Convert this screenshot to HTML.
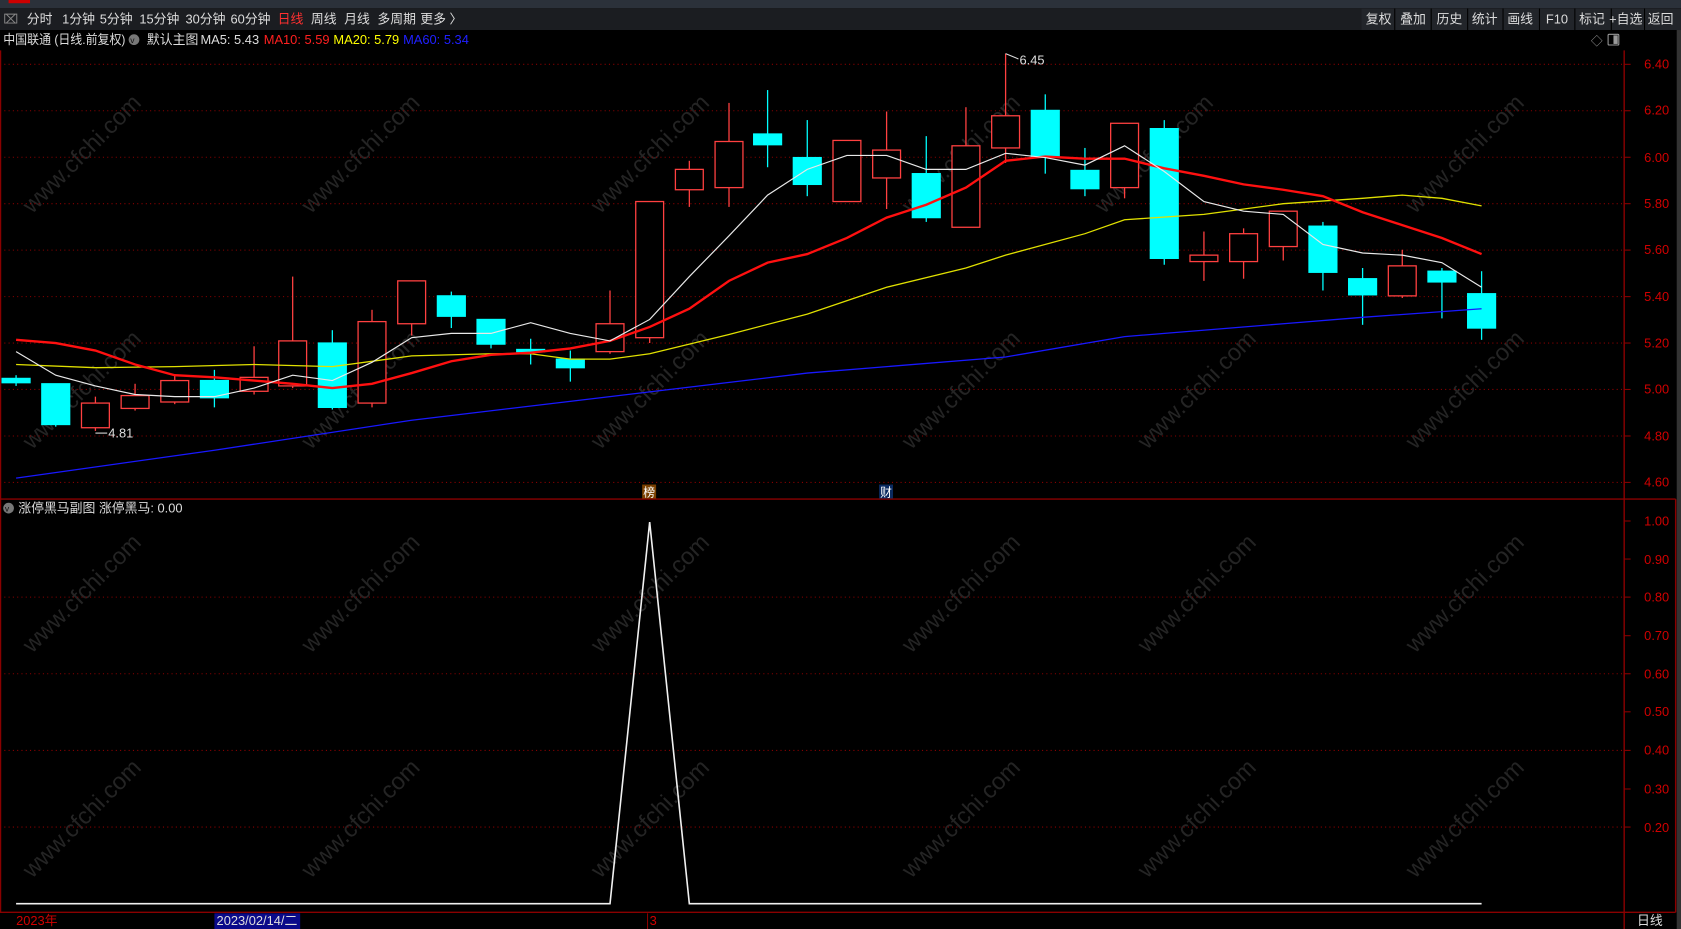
<!DOCTYPE html>
<html><head><meta charset="utf-8"><style>
html,body{margin:0;padding:0;background:#000;width:1681px;height:929px;overflow:hidden}
svg{display:block}
text{font-family:"Liberation Sans","Noto Sans CJK SC",sans-serif}
</style></head><body>
<svg width="1681" height="929" viewBox="0 0 1568 866.6" preserveAspectRatio="none" xmlns="http://www.w3.org/2000/svg">
<rect width="1568" height="867" fill="#000"/>
<rect x="0" y="0" width="1568" height="7.5" fill="#2b313a"/>
<rect x="8" y="0" width="20" height="3" fill="#c00"/>
<rect x="0" y="7.5" width="1568" height="20.5" fill="#1b1d21"/>
<text x="3" y="22" font-size="12" fill="#888">⌧</text>
<g font-size="12" fill="#ddd">
<text x="25" y="22">分时</text><text x="58" y="22">1分钟</text><text x="93" y="22">5分钟</text><text x="130" y="22">15分钟</text><text x="173" y="22">30分钟</text><text x="215" y="22">60分钟</text>
<text x="259" y="22" fill="#ff3030">日线</text><text x="290" y="22">周线</text><text x="321" y="22">月线</text><text x="352" y="22">多周期</text><text x="392" y="22">更多 〉</text>
</g>
<g font-size="12" fill="#ddd">
<rect x="1270" y="8" width="298" height="20" fill="#22252a"/>
<g stroke="#000" stroke-width="1"><line x1="1301" y1="8" x2="1301" y2="28"/><line x1="1335" y1="8" x2="1335" y2="28"/><line x1="1369" y1="8" x2="1369" y2="28"/><line x1="1402" y1="8" x2="1402" y2="28"/><line x1="1436" y1="8" x2="1436" y2="28"/><line x1="1469" y1="8" x2="1469" y2="28"/><line x1="1503" y1="8" x2="1503" y2="28"/><line x1="1534" y1="8" x2="1534" y2="28"/></g>
<text x="1274" y="22">复权</text><text x="1306" y="22">叠加</text><text x="1340" y="22">历史</text><text x="1373" y="22">统计</text><text x="1406" y="22">画线</text><text x="1442" y="22">F10</text><text x="1473" y="22">标记</text><text x="1501" y="22">+自选</text><text x="1537" y="22">返回</text>
</g>
<g font-size="12">
<text x="3" y="41" fill="#ddd" textLength="114" lengthAdjust="spacingAndGlyphs">中国联通 (日线.前复权)</text>
<circle cx="125" cy="37" r="5" fill="#777"/><text x="121.5" y="40" font-size="8" fill="#111">v</text>
<text x="137" y="41" fill="#ddd">默认主图</text>
<text x="187" y="41" fill="#ddd">MA5: 5.43</text>
<text x="246" y="41" fill="#ff2020">MA10: 5.59</text>
<text x="311" y="41" fill="#ffff00">MA20: 5.79</text>
<text x="376" y="41" fill="#2020ff">MA60: 5.34</text>
</g>
<text x="1484" y="42" font-size="11" fill="#999">◇</text>
<rect x="1500" y="32" width="10" height="10" fill="none" stroke="#999" rx="1"/><rect x="1505" y="33" width="4" height="8" fill="#999"/>
<g font-size="22" fill="#242424">
<text transform="translate(30,200) rotate(-45)">www.cfchi.com</text>
<text transform="translate(290,200) rotate(-45)">www.cfchi.com</text>
<text transform="translate(560,200) rotate(-45)">www.cfchi.com</text>
<text transform="translate(850,200) rotate(-45)">www.cfchi.com</text>
<text transform="translate(1030,200) rotate(-45)">www.cfchi.com</text>
<text transform="translate(1320,200) rotate(-45)">www.cfchi.com</text>
<text transform="translate(30,420) rotate(-45)">www.cfchi.com</text>
<text transform="translate(290,420) rotate(-45)">www.cfchi.com</text>
<text transform="translate(560,420) rotate(-45)">www.cfchi.com</text>
<text transform="translate(850,420) rotate(-45)">www.cfchi.com</text>
<text transform="translate(1070,420) rotate(-45)">www.cfchi.com</text>
<text transform="translate(1320,420) rotate(-45)">www.cfchi.com</text>
<text transform="translate(30,610) rotate(-45)">www.cfchi.com</text>
<text transform="translate(290,610) rotate(-45)">www.cfchi.com</text>
<text transform="translate(560,610) rotate(-45)">www.cfchi.com</text>
<text transform="translate(850,610) rotate(-45)">www.cfchi.com</text>
<text transform="translate(1070,610) rotate(-45)">www.cfchi.com</text>
<text transform="translate(1320,610) rotate(-45)">www.cfchi.com</text>
<text transform="translate(30,820) rotate(-45)">www.cfchi.com</text>
<text transform="translate(290,820) rotate(-45)">www.cfchi.com</text>
<text transform="translate(560,820) rotate(-45)">www.cfchi.com</text>
<text transform="translate(850,820) rotate(-45)">www.cfchi.com</text>
<text transform="translate(1070,820) rotate(-45)">www.cfchi.com</text>
<text transform="translate(1320,820) rotate(-45)">www.cfchi.com</text>
</g>
<g stroke="#8a0000" stroke-width="1" stroke-dasharray="1,3">
<line x1="0" y1="60" x2="1515" y2="60"/><line x1="0" y1="103.3" x2="1515" y2="103.3"/><line x1="0" y1="146.7" x2="1515" y2="146.7"/><line x1="0" y1="190" x2="1515" y2="190"/><line x1="0" y1="233.3" x2="1515" y2="233.3"/><line x1="0" y1="276.7" x2="1515" y2="276.7"/><line x1="0" y1="320" x2="1515" y2="320"/><line x1="0" y1="363.3" x2="1515" y2="363.3"/><line x1="0" y1="406.7" x2="1515" y2="406.7"/><line x1="0" y1="450" x2="1515" y2="450"/>
<line x1="0" y1="557" x2="1515" y2="557"/><line x1="0" y1="628.5" x2="1515" y2="628.5"/><line x1="0" y1="700" x2="1515" y2="700"/><line x1="0" y1="771.5" x2="1515" y2="771.5"/>
</g>
<g stroke="#8a0000" stroke-width="1.3" fill="none">
<line x1="1515" y1="47" x2="1515" y2="867"/>
<line x1="0" y1="465.5" x2="1563" y2="465.5"/>
<line x1="0" y1="851" x2="1563" y2="851"/>
<line x1="1563" y1="465.5" x2="1563" y2="851"/>
<line x1="0.5" y1="47" x2="0.5" y2="851"/>
</g>
<rect x="1564" y="28" width="4" height="839" fill="#333"/>
<g stroke="#8a0000"><line x1="1515" y1="60" x2="1521" y2="60"/><line x1="1515" y1="103.3" x2="1521" y2="103.3"/><line x1="1515" y1="146.7" x2="1521" y2="146.7"/><line x1="1515" y1="190" x2="1521" y2="190"/><line x1="1515" y1="233.3" x2="1521" y2="233.3"/><line x1="1515" y1="276.7" x2="1521" y2="276.7"/><line x1="1515" y1="320" x2="1521" y2="320"/><line x1="1515" y1="363.3" x2="1521" y2="363.3"/><line x1="1515" y1="406.7" x2="1521" y2="406.7"/><line x1="1515" y1="450" x2="1521" y2="450"/>
<line x1="1515" y1="486" x2="1521" y2="486"/><line x1="1515" y1="521.5" x2="1521" y2="521.5"/><line x1="1515" y1="557" x2="1521" y2="557"/><line x1="1515" y1="593" x2="1521" y2="593"/><line x1="1515" y1="628.5" x2="1521" y2="628.5"/><line x1="1515" y1="664" x2="1521" y2="664"/><line x1="1515" y1="700" x2="1521" y2="700"/><line x1="1515" y1="736" x2="1521" y2="736"/><line x1="1515" y1="771.5" x2="1521" y2="771.5"/></g>
<g font-size="12" fill="#d00000" text-anchor="end">
<text x="1557" y="64">6.40</text><text x="1557" y="107">6.20</text><text x="1557" y="151">6.00</text><text x="1557" y="194">5.80</text><text x="1557" y="237">5.60</text><text x="1557" y="281">5.40</text><text x="1557" y="324">5.20</text><text x="1557" y="367">5.00</text><text x="1557" y="411">4.80</text><text x="1557" y="454">4.60</text>
<text x="1557" y="490">1.00</text><text x="1557" y="526">0.90</text><text x="1557" y="561">0.80</text><text x="1557" y="597">0.70</text><text x="1557" y="633">0.60</text><text x="1557" y="668">0.50</text><text x="1557" y="704">0.40</text><text x="1557" y="740">0.30</text><text x="1557" y="776">0.20</text>
</g>
<g stroke="#ff4040" stroke-width="1.2" fill="#000">
<line x1="89" y1="370" x2="89" y2="402"/><rect x="76" y="376" width="26" height="23"/>
<line x1="126" y1="358" x2="126" y2="383"/><rect x="113" y="369" width="26" height="12"/>
<line x1="163" y1="350" x2="163" y2="377"/><rect x="150" y="355" width="26" height="20"/>
<line x1="237" y1="323" x2="237" y2="368"/><rect x="224" y="352" width="26" height="13"/>
<line x1="273" y1="258" x2="273" y2="362"/><rect x="260" y="318" width="26" height="42"/>
<line x1="347" y1="289" x2="347" y2="380"/><rect x="334" y="300" width="26" height="76"/>
<line x1="384" y1="262" x2="384" y2="313"/><rect x="371" y="262" width="26" height="40"/>
<line x1="569" y1="271" x2="569" y2="330"/><rect x="556" y="302" width="26" height="26"/>
<line x1="606" y1="188" x2="606" y2="320"/><rect x="593" y="188" width="26" height="127"/>
<line x1="643" y1="150" x2="643" y2="193"/><rect x="630" y="158" width="26" height="19"/>
<line x1="680" y1="96" x2="680" y2="193"/><rect x="667" y="132" width="26" height="43"/>
<line x1="790" y1="131" x2="790" y2="188"/><rect x="777" y="131" width="26" height="57"/>
<line x1="827" y1="104" x2="827" y2="195"/><rect x="814" y="140" width="26" height="26"/>
<line x1="901" y1="100" x2="901" y2="212"/><rect x="888" y="136" width="26" height="76"/>
<line x1="938" y1="50" x2="938" y2="152"/><rect x="925" y="108" width="26" height="30"/>
<line x1="1049" y1="115" x2="1049" y2="185"/><rect x="1036" y="115" width="26" height="60"/>
<line x1="1123" y1="216" x2="1123" y2="262"/><rect x="1110" y="238" width="26" height="6"/>
<line x1="1160" y1="213" x2="1160" y2="260"/><rect x="1147" y="218" width="26" height="26"/>
<line x1="1197" y1="197" x2="1197" y2="243"/><rect x="1184" y="197" width="26" height="33"/>
<line x1="1308" y1="233" x2="1308" y2="278"/><rect x="1295" y="248" width="26" height="28"/>
</g>
<g stroke="#00ffff" stroke-width="1.2" fill="#00ffff">
<line x1="15" y1="350" x2="15" y2="360"/><rect x="2" y="353" width="26" height="4"/>
<line x1="52" y1="358" x2="52" y2="398"/><rect x="39" y="358" width="26" height="38"/>
<line x1="200" y1="345" x2="200" y2="380"/><rect x="187" y="355" width="26" height="16"/>
<line x1="310" y1="308" x2="310" y2="382"/><rect x="297" y="320" width="26" height="60"/>
<line x1="421" y1="272" x2="421" y2="306"/><rect x="408" y="276" width="26" height="19"/>
<line x1="458" y1="298" x2="458" y2="325"/><rect x="445" y="298" width="26" height="23"/>
<line x1="495" y1="316" x2="495" y2="340"/><rect x="482" y="326" width="26" height="2"/>
<line x1="532" y1="327" x2="532" y2="356"/><rect x="519" y="335" width="26" height="8"/>
<line x1="716" y1="84" x2="716" y2="156"/><rect x="703" y="125" width="26" height="10"/>
<line x1="753" y1="112" x2="753" y2="183"/><rect x="740" y="147" width="26" height="25"/>
<line x1="864" y1="127" x2="864" y2="207"/><rect x="851" y="162" width="26" height="41"/>
<line x1="975" y1="88" x2="975" y2="162"/><rect x="962" y="103" width="26" height="43"/>
<line x1="1012" y1="138" x2="1012" y2="183"/><rect x="999" y="159" width="26" height="17"/>
<line x1="1086" y1="112" x2="1086" y2="247"/><rect x="1073" y="120" width="26" height="121"/>
<line x1="1234" y1="207" x2="1234" y2="271"/><rect x="1221" y="211" width="26" height="43"/>
<line x1="1271" y1="250" x2="1271" y2="303"/><rect x="1258" y="260" width="26" height="15"/>
<line x1="1345" y1="250" x2="1345" y2="297"/><rect x="1332" y="253" width="26" height="10"/>
<line x1="1382" y1="253" x2="1382" y2="317"/><rect x="1369" y="274" width="26" height="32"/>
</g>
<polyline fill="none" stroke="#1818ff" stroke-width="1.2" points="15,446 200,420 384,392 569,370 753,348 938,333 1049,314 1197,302 1271,296 1382,288"/>
<polyline fill="none" stroke="#e0e000" stroke-width="1.2" points="15,340 89,343 163,342 237,340 310,342 384,332 458,330 495,330 532,335 569,335 606,330 680,312 753,293 827,268 901,250 938,238 1012,218 1049,205 1123,200 1197,190 1271,185 1308,182 1345,185 1382,192"/>
<polyline fill="none" stroke="#ff1010" stroke-width="2.2" points="15,317 52,320 89,327 126,340 163,350 200,352 237,355 273,358 310,362 347,358 384,348 421,337 458,331 495,329 532,325 569,318 606,305 643,288 680,262 716,245 753,237 790,222 827,203 864,191 901,175 938,150 975,146 1012,148 1049,148 1086,157 1123,164 1160,172 1197,177 1234,183 1271,198 1308,210 1345,222 1382,237"/>
<polyline fill="none" stroke="#e8e8e8" stroke-width="1.1" points="15,328 52,350 89,360 126,368 163,370 200,370 237,362 273,350 310,355 347,338 384,315 421,311 458,311 495,301 532,311 569,318 606,298 643,258 680,220 716,182 753,158 790,145 827,145 864,158 901,158 938,143 975,147 1012,154 1049,136 1086,160 1123,188 1160,197 1197,200 1234,228 1271,236 1308,238 1345,245 1382,268"/>
<g font-size="12" fill="#ddd"><text x="101" y="408">4.81</text><text x="951" y="60">6.45</text></g>
<g stroke="#ddd" fill="none"><line x1="89" y1="404" x2="100" y2="404"/><line x1="938" y1="50" x2="950" y2="55"/></g>
<rect x="599" y="452" width="13" height="13" fill="#7a4000"/><text x="600" y="463" font-size="11" fill="#fff">榜</text>
<rect x="820" y="452" width="13" height="13" fill="#0a2a60"/><text x="821" y="463" font-size="11" fill="#fff">财</text>
<circle cx="8" cy="474" r="5" fill="#777"/><text x="4.5" y="477" font-size="8" fill="#111">v</text>
<text x="17" y="478" font-size="12" fill="#ddd">涨停黑马副图 涨停黑马: 0.00</text>
<polyline fill="none" stroke="#f0f0f0" stroke-width="1.5" points="15,843 569,843 606,487 643,843 1382,843"/>
<text x="15" y="863" font-size="12" fill="#d00000">2023年</text>
<rect x="200" y="852" width="80" height="15" fill="#0a0a8a"/>
<text x="202" y="863" font-size="12" fill="#ddd">2023/02/14/二</text>
<line x1="604" y1="852" x2="604" y2="867" stroke="#8a0000"/>
<text x="606" y="863" font-size="12" fill="#d00000">3</text>
<text x="1527" y="863" font-size="12" fill="#ddd">日线</text>
</svg>
</body></html>
